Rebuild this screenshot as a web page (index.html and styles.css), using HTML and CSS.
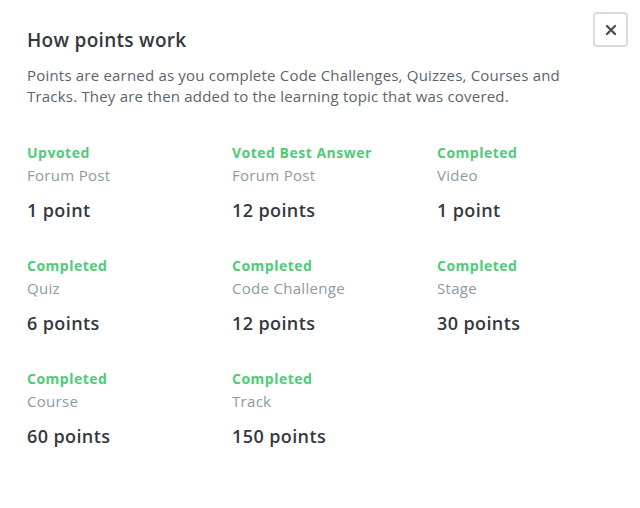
FILE: index.html
```html
<!DOCTYPE html>
<html>
<head>
<meta charset="utf-8">
<link rel="stylesheet" href="styles.css">
</head>
<body>
<div class="modal">
  <button class="close" aria-label="Close">
    <svg width="12" height="12" viewBox="0 0 12 12"><path d="M2 2L10 10M10 2L2 10" stroke="#4a5158" stroke-width="2.4" stroke-linecap="round"/></svg>
  </button>
  <h1 class="title">How points work</h1>
  <p class="intro">Points are earned as you complete Code Challenges, Quizzes, Courses and Tracks. They are then added to the learning topic that was covered.</p>
  <div class="grid">
    <div class="item"><div class="action">Upvoted</div><div class="kind">Forum Post</div><div class="pts">1 point</div></div>
    <div class="item"><div class="action">Voted Best Answer</div><div class="kind">Forum Post</div><div class="pts">12 points</div></div>
    <div class="item"><div class="action">Completed</div><div class="kind">Video</div><div class="pts">1 point</div></div>
    <div class="item"><div class="action">Completed</div><div class="kind">Quiz</div><div class="pts">6 points</div></div>
    <div class="item"><div class="action">Completed</div><div class="kind">Code Challenge</div><div class="pts">12 points</div></div>
    <div class="item"><div class="action">Completed</div><div class="kind">Stage</div><div class="pts">30 points</div></div>
    <div class="item"><div class="action">Completed</div><div class="kind">Course</div><div class="pts">60 points</div></div>
    <div class="item"><div class="action">Completed</div><div class="kind">Track</div><div class="pts">150 points</div></div>
  </div>
</div>
</body>
</html>
```
FILE: styles.css
```css
html, body {
  margin: 0;
  padding: 0;
  background: #fff;
}
body {
  font-family: "Open Sans", "Liberation Sans", sans-serif;
  color: #384047;
}
.modal {
  position: relative;
  width: 640px;
  height: 508px;
  box-sizing: border-box;
  padding: 28px 27px 0 27px;
}
.close {
  position: absolute;
  top: 12px;
  left: 593px;
  width: 35px;
  height: 35px;
  box-sizing: border-box;
  border: 2px solid #d8dce0;
  border-radius: 4px;
  background: #fff;
  padding: 0;
  display: flex;
  align-items: center;
  justify-content: center;
}
.title {
  margin: 0;
  font-size: 19px;
  font-weight: 600;
  letter-spacing: 0.3px;
  line-height: 24px;
  color: #33393f;
}
.intro {
  margin: 13px 0 0 0;
  width: 560px;
  font-size: 15px;
  letter-spacing: 0.2px;
  line-height: 21px;
  color: #5b646d;
}
.grid {
  margin-top: 35px;
  display: grid;
  grid-template-columns: 205px 205px 205px;
  row-gap: 31px;
}
.action {
  font-size: 14px;
  font-weight: 700;
  letter-spacing: 0.5px;
  line-height: 22px;
  color: #4fcb78;
}
.kind {
  font-size: 15px;
  letter-spacing: 0.3px;
  line-height: 22px;
  color: #8d9aa5;
}
.pts {
  margin-top: 10px;
  font-size: 18px;
  font-weight: 600;
  letter-spacing: 0.4px;
  line-height: 28px;
  color: #33393f;
}
```
